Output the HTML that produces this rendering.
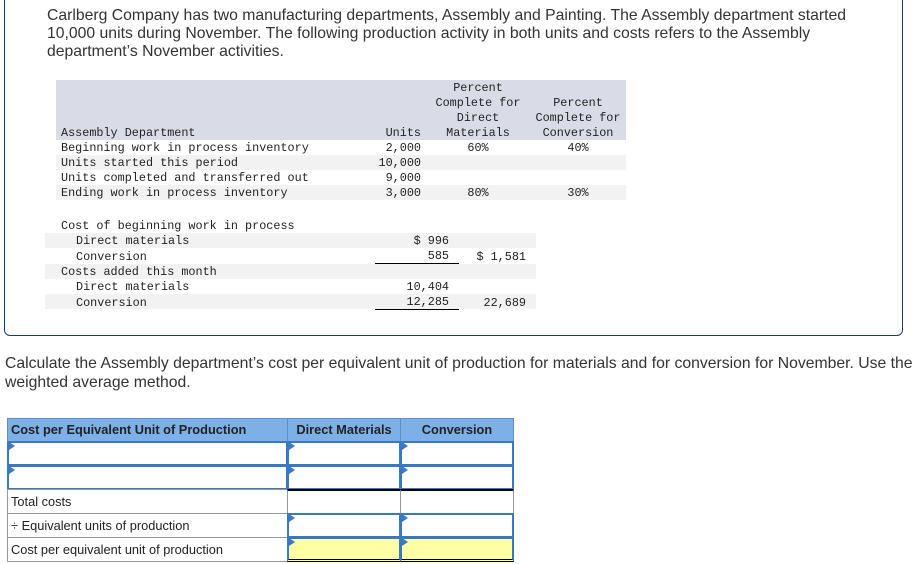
<!DOCTYPE html><html><head><style>
body{margin:0;width:924px;height:564px;position:relative;background:#fff;font-family:"Liberation Sans",sans-serif;color:#333;overflow:hidden}
.a{position:absolute;white-space:nowrap}
.m{font-family:"Liberation Mono",monospace;font-size:11.8px;color:#222;line-height:15px}
.p{font-size:15.75px;line-height:18px;color:#333}
.g{position:absolute;background:#f2f2f2}
.r{text-align:right}
.c{text-align:center}
.cell{position:absolute;box-sizing:border-box;border:1px solid #999}
.in{position:absolute;box-sizing:border-box;border:2px solid #3a78c4}
.in:before{content:"";position:absolute;left:0;top:0;border-left:6px solid #3a78c4;border-top:4px solid transparent;border-bottom:4px solid transparent;top:-1px}
.t{font-size:12.8px;color:#222;line-height:24px;padding-left:3px}
</style></head><body>
<div style="position:absolute;left:4px;top:-10px;width:899px;height:346px;border:1.5px solid #1e3a66;border-radius:6px;box-sizing:border-box"></div>
<div class="a p" style="left:47px;top:7px">Carlberg Company has two manufacturing departments, Assembly and Painting. The Assembly department started</div>
<div class="a p" style="left:47px;top:25px">10,000 units during November. The following production activity in both units and costs refers to the Assembly</div>
<div class="a p" style="left:47px;top:43px">department’s November activities.</div>

<div class="g" style="left:56px;top:80px;width:570px;height:60px;background:#d9dce6"></div>
<div class="g" style="left:56px;top:155px;width:570px;height:15px"></div>
<div class="g" style="left:56px;top:185px;width:570px;height:15px"></div>
<div class="a m c" style="left:428px;top:81px;width:100px">Percent<br>Complete for<br>Direct<br>Materials</div>
<div class="a m c" style="left:528px;top:96px;width:100px">Percent<br>Complete for<br>Conversion</div>
<div class="a m" style="left:61px;top:126px">Assembly Department<br>Beginning work in process inventory<br>Units started this period<br>Units completed and transferred out<br>Ending work in process inventory</div>
<div class="a m r" style="left:360px;top:126px;width:61px">Units<br>2,000<br>10,000<br>9,000<br>3,000</div>
<div class="a m c" style="left:428px;top:141px;width:100px">60%<br><br><br>80%</div>
<div class="a m c" style="left:528px;top:141px;width:100px">40%<br><br><br>30%</div>

<div class="g" style="left:45px;top:233px;width:491px;height:15px"></div>
<div class="g" style="left:45px;top:264px;width:491px;height:15px"></div>
<div class="g" style="left:45px;top:294px;width:491px;height:15px"></div>
<div class="a m" style="left:61px;top:219px">Cost of beginning work in process</div>
<div class="a m" style="left:76px;top:234px">Direct materials</div>
<div class="a m" style="left:76px;top:250px">Conversion</div>
<div class="a m" style="left:61px;top:265px">Costs added this month</div>
<div class="a m" style="left:76px;top:280px">Direct materials</div>
<div class="a m" style="left:76px;top:296px">Conversion</div>
<div class="a m r" style="left:370px;top:234px;width:79px">$ 996</div>
<div class="a m r" style="left:370px;top:249px;width:79px">585</div>
<div class="a m r" style="left:370px;top:280px;width:79px">10,404</div>
<div class="a m r" style="left:370px;top:295px;width:79px">12,285</div>
<div class="a m r" style="left:460px;top:250px;width:66px">$ 1,581</div>
<div class="a m r" style="left:460px;top:296px;width:66px">22,689</div>
<div class="a" style="left:375px;top:263px;width:84px;height:1px;background:#000"></div>
<div class="a" style="left:375px;top:309px;width:84px;height:1px;background:#000"></div>

<div class="a p" style="left:5px;top:355px">Calculate the Assembly department’s cost per equivalent unit of production for materials and for conversion for November. Use the</div>
<div class="a p" style="left:5px;top:374px">weighted average method.</div>

<div class="cell" style="left:7px;top:418px;width:281px;height:24px;background:#7eb0e8;border-color:#5f8fc8"><div class="t" style="font-weight:bold;line-height:22px">Cost per Equivalent Unit of Production</div></div>
<div class="cell" style="left:287px;top:418px;width:114px;height:24px;background:#7eb0e8;border-color:#5f8fc8"><div class="t c" style="font-weight:bold;line-height:22px;padding:0">Direct Materials</div></div>
<div class="cell" style="left:400px;top:418px;width:114px;height:24px;background:#7eb0e8;border-color:#5f8fc8"><div class="t c" style="font-weight:bold;line-height:22px;padding:0">Conversion</div></div>

<div class="in" style="left:7px;top:441px;width:281px;height:25px"></div>
<div class="in" style="left:287px;top:441px;width:114px;height:25px"></div>
<div class="in" style="left:400px;top:441px;width:114px;height:25px"></div>
<div class="in" style="left:7px;top:465px;width:281px;height:25px"></div>
<div class="in" style="left:287px;top:465px;width:114px;height:25px"></div>
<div class="in" style="left:400px;top:465px;width:114px;height:25px"></div>

<div class="cell" style="left:7px;top:489px;width:281px;height:25px"><div class="t">Total costs</div></div>
<div class="cell" style="left:287px;top:489px;width:114px;height:25px;border-top:2px solid #000"></div>
<div class="cell" style="left:400px;top:489px;width:114px;height:25px;border-top:2px solid #000"></div>
<div class="cell" style="left:7px;top:513px;width:281px;height:25px"><div class="t">÷ Equivalent units of production</div></div>
<div class="in" style="left:287px;top:513px;width:114px;height:25px"></div>
<div class="in" style="left:400px;top:513px;width:114px;height:25px"></div>
<div class="cell" style="left:7px;top:537px;width:281px;height:25px"><div class="t">Cost per equivalent unit of production</div></div>
<div class="in" style="left:287px;top:537px;width:114px;height:25px;background:#ffffa6;border-bottom:3px double #000"></div>
<div class="in" style="left:400px;top:537px;width:114px;height:25px;background:#ffffa6;border-bottom:3px double #000"></div>
</body></html>
